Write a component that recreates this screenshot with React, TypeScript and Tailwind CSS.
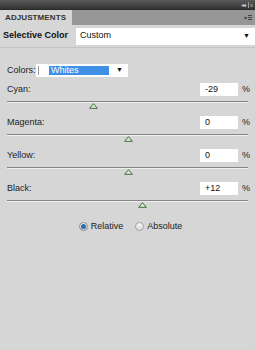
import React from 'react';

const ROWS = [
  { label: 'Cyan:', value: '-29', pos: -29 },
  { label: 'Magenta:', value: '0', pos: 0 },
  { label: 'Yellow:', value: '0', pos: 0 },
  { label: 'Black:', value: '+12', pos: 12 },
];

function Thumb() {
  return (
    <svg width="9" height="6" viewBox="0 0 9 6">
      <path d="M4.5 0.7 L8.3 5.3 L0.7 5.3 Z" fill="#dcefd8" stroke="#3d6b3a" strokeWidth="1" />
    </svg>
  );
}

function SliderRow({ label, value, pos }: { label: string; value: string; pos: number }) {
  // range -100..100 mapped onto the track
  const pct = 50 + pos / 2;
  return (
    <div className="h-[33px]">
      <div className="flex h-[13px] items-center">
        <span className="ml-[7px] flex-1 text-[9px] text-[#222]">{label}</span>
        <div className="flex h-[13px] w-[38px] items-center bg-white pl-[5px] text-[9px] text-[#111]">{value}</div>
        <span className="ml-[4px] mr-[5px] text-[9px] text-[#222]">%</span>
      </div>
      <div className="relative mx-[7px] mt-[5px] h-[2px] border-t border-[#858585] border-b border-b-[#eeeeee]">
        <div className="absolute top-[1px] -ml-[4px]" style={{ left: `${pct}%` }}>
          <Thumb />
        </div>
      </div>
    </div>
  );
}

export default function App() {
  return (
    <div className="flex h-[350px] w-[255px] flex-col bg-[#d6d6d6] font-['Liberation_Sans',Arial,sans-serif]">
      {/* title strip */}
      <div className="flex h-[9px] items-center justify-end bg-gradient-to-b from-[#5a5a5a] to-[#343434] pr-[2px]">
        <span className="text-[6px] leading-none tracking-[-1px] text-[#c8c8c8]">◂◂</span>
        <span className="ml-[3px] h-[6px] w-[1px] bg-[#9a9a9a]" />
        <span className="ml-[1px] text-[6px] leading-none text-[#c8c8c8]">x</span>
      </div>
      {/* tab strip */}
      <div className="flex h-[16px] border-t border-[#2a2a2a] bg-[#979797]">
        <div className="flex w-[72px] items-center bg-[#d6d6d6] pl-[5px] text-[8px] font-bold tracking-[0.1px] text-[#333]">
          ADJUSTMENTS
        </div>
        <div className="flex flex-1 items-center justify-end pr-[3px]">
          <span className="text-[6px] leading-none text-[#444]">▾</span>
          <div className="ml-[1px] flex flex-col gap-[1px]">
            <span className="h-[1px] w-[4px] bg-[#444]" />
            <span className="h-[1px] w-[4px] bg-[#444]" />
            <span className="h-[1px] w-[4px] bg-[#444]" />
          </div>
        </div>
      </div>
      {/* preset row */}
      <div className="flex h-[23px] items-center border-b border-[#c4c4c4]">
        <span className="ml-[3px] w-[73px] text-[9px] font-bold text-[#111]">Selective Color</span>
        <div className="flex h-[17px] flex-1 items-center justify-between bg-white pl-[4px] pr-[5px]">
          <span className="text-[9px] text-[#111]">Custom</span>
          <span className="text-[7px] text-[#111]">▼</span>
        </div>
      </div>
      {/* colors select */}
      <div className="mt-[16px] flex h-[13px] items-center">
        <span className="ml-[7px] w-[29px] text-[9px] text-[#222]">Colors:</span>
        <div className="flex h-[13px] w-[92px] items-center bg-white pl-[2px]">
          <span className="h-[9px] w-[1px] bg-[#9a9a9a]" />
          <span className="ml-[10px] flex h-[9px] w-[60px] items-center bg-[#3f8fe6] pl-[2px] text-[9px] text-white">
            Whites
          </span>
          <span className="ml-[7px] text-[7px] text-[#111]">▼</span>
        </div>
      </div>
      {/* sliders */}
      <div className="mt-[6px]">
        {ROWS.map(r => (
          <SliderRow key={r.label} label={r.label} value={r.value} pos={r.pos} />
        ))}
      </div>
      {/* mode radios */}
      <div className="mt-[5px] flex items-center justify-center pl-[6px]">
        <div className="flex items-center">
          <span className="flex h-[9px] w-[9px] items-center justify-center rounded-full border border-[#8a8a8a] bg-gradient-to-b from-[#f4f4f4] to-[#d0d0d0]">
            <span className="h-[5px] w-[5px] rounded-full bg-[#2a6ea8]" />
          </span>
          <span className="ml-[3px] text-[9px] text-[#222]">Relative</span>
        </div>
        <div className="ml-[12px] flex items-center">
          <span className="h-[9px] w-[9px] rounded-full border border-[#a0a0a0] bg-gradient-to-b from-[#f8f8f8] to-[#dadada]" />
          <span className="ml-[3px] text-[9px] text-[#222]">Absolute</span>
        </div>
      </div>
    </div>
  );
}
